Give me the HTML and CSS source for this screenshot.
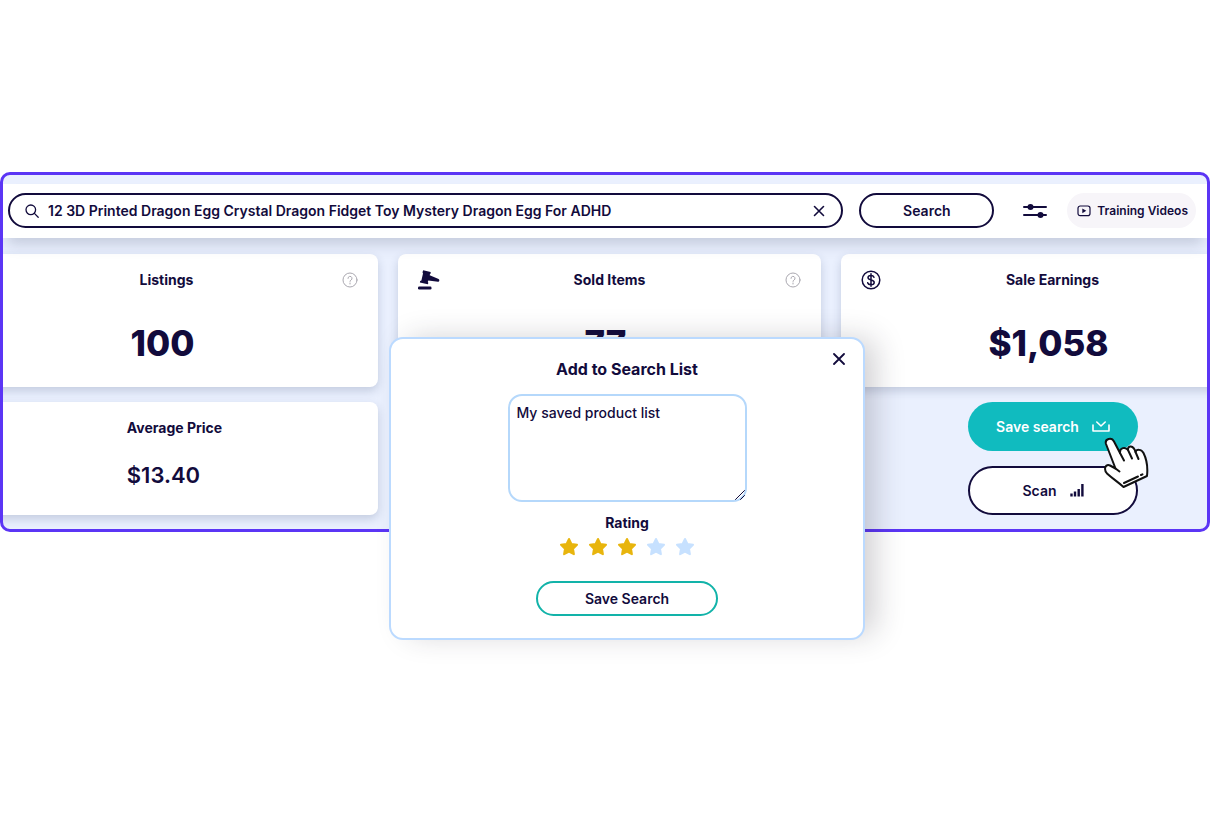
FILE: index.html
```html
<!DOCTYPE html>
<html lang="en">
<head>
    <meta charset="UTF-8">
    <meta name="viewport" content="width=device-width, initial-scale=1.0">
    <title>Product Search</title>
    <link rel="stylesheet" href="styles.css">
</head>
<body>
    <main class="page">
        <div class="panel">
            <form class="topbar">
                <div class="search-box">
                    <svg class="search-icon" viewBox="0 0 14 14" aria-hidden="true">
                        <circle cx="5.8" cy="5.8" r="4.8"/>
                        <path d="M9.4 9.4l3.8 3.8"/>
                    </svg>
                    <input class="search-input" type="text" aria-label="Search products" value="12 3D Printed Dragon Egg Crystal Dragon Fidget Toy Mystery Dragon Egg For ADHD">
                    <button class="icon-button" type="button" aria-label="Clear search">
                        <svg class="clear-icon" viewBox="0 0 12 12"><path d="M1.5 1.5l9 9M10.5 1.5l-9 9"/></svg>
                    </button>
                </div>
                <button class="search-button" type="button">Search</button>
                <button class="icon-button" type="button" aria-label="Filters">
                    <svg class="filter-icon" viewBox="0 0 24 16">
                        <path d="M1 4h22M1 12h22"/>
                        <circle cx="7.5" cy="4" r="3"/>
                        <circle cx="17.5" cy="12" r="3"/>
                    </svg>
                </button>
                <a class="training" href="#">
                    <svg class="video-icon" viewBox="0 0 14 12" aria-hidden="true">
                        <rect x="1" y="1" width="12" height="9.6" rx="2.2"/>
                        <path d="M5.3 3.4v4.8l4-2.4z"/>
                    </svg>
                    Training Videos
                </a>
            </form>

            <div class="cards">
                <section class="card">
                    <div class="card-head">
                        <span></span>
                        <h2>Listings</h2>
                        <button class="icon-button help" type="button" aria-label="About listings">
                            <svg class="help-icon" viewBox="0 0 16 16"><circle cx="8" cy="8" r="7"/><path d="M6 6.4a2 2 0 1 1 3 1.7c-.7.4-1 .7-1 1.3M8 11v1"/></svg>
                        </button>
                    </div>
                    <p class="figure">100</p>
                </section>
                <section class="card">
                    <div class="card-head">
                        <svg class="gavel-icon" viewBox="0 0 22 20" aria-hidden="true">
                            <path d="M5.2.3L12.600 2l.2 1.300-.8.600-.3 1.300 8.900 3.800c1.300.6.900 3-.6 2.800l-9.700-1.300-.5 1.600.6.900-.6 1.200L1.900 12.400l.2-1.300 1.300-.7 1.600-6.800-.5-1.400z"/>
                            <rect x="0" y="16.500" width="13.500" height="3" rx="1.2"/>
                        </svg>
                        <h2>Sold Items</h2>
                        <button class="icon-button help" type="button" aria-label="About sold items">
                            <svg class="help-icon" viewBox="0 0 16 16"><circle cx="8" cy="8" r="7"/><path d="M6 6.4a2 2 0 1 1 3 1.7c-.7.4-1 .7-1 1.3M8 11v1"/></svg>
                        </button>
                    </div>
                    <p class="figure">77</p>
                </section>
                <section class="card">
                    <div class="card-head">
                        <svg class="dollar-icon" viewBox="0 0 20 20" aria-hidden="true">
                            <circle cx="10" cy="10" r="8.8"/>
                            <path d="M13 7.2C12.5 5.9 11.4 5.4 10 5.4c-1.7 0-3 .8-3 2.2 0 1.5 1.4 2 3 2.4 1.7.4 3.2.9 3.2 2.4s-1.4 2.3-3.2 2.3c-1.6 0-2.9-.7-3.3-2M10 3.7v12.6"/>
                        </svg>
                        <h2>Sale Earnings</h2>
                        <span></span>
                    </div>
                    <p class="figure">$1,058</p>
                </section>
                <section class="card average">
                    <div>
                        <h2>Average Price</h2>
                        <p class="price">$13.40</p>
                    </div>
                </section>
                <div class="actions">
                    <button class="pill save" type="button">
                        Save search
                        <svg class="save-icon" viewBox="0 0 18 11" aria-hidden="true"><path d="M1 4v6h16V4M4.8 1L9 5l4.2-4"/></svg>
                    </button>
                    <button class="pill scan" type="button">
                        Scan
                        <svg class="bars-icon" viewBox="0 0 14 13" aria-hidden="true"><path d="M1.5 9.5v3M5 7.5v5M8.7 5v7.500M12.400 0v12.500"/></svg>
                    </button>
                </div>
            </div>
        </div>

        <svg class="hand" viewBox="0 0 46 52" aria-hidden="true">
            <path d="M3 7c-1.500-5 5.500-7.500 8-2.500l6 11.500c-.5-5.500 5.500-6.500 8-3-.5-5 5.500-5 7.500 2 1-3 6-3 8 1 4 8 4.500 14 3.500 23L20.500 50C15 45 10 42 4 36.500 0 31.500 3 26.500 7 28.500l5.500 3z"/>
            <path d="M17 16l4 7.500M25 13l4 8.500M32.500 15l3 7M12.500 31.500l4 3"/>
            <path d="M21 46l14-6.500M38 38l1.500-.7"/>
        </svg>

        <form class="modal" role="dialog" aria-labelledby="modal-title">
            <button class="icon-button modal-close" type="button" aria-label="Close">
                <svg class="close-icon" viewBox="0 0 12 12"><path d="M1 1l10 10M11 1L1 11"/></svg>
            </button>
            <h1 id="modal-title">Add to Search List</h1>
            <div class="note">
                <textarea aria-label="Search list name">My saved product list</textarea>
                <svg class="grip" viewBox="0 0 10 10" aria-hidden="true"><path d="M.5 9.5l9-9M5.500 9.500l4-4"/></svg>
            </div>
            <fieldset class="rating">
                <legend>Rating</legend>
                <div class="stars">
                    <label class="star on"><input type="radio" name="rating" value="1" aria-label="1 star"><svg viewBox="0 0 20 19"><path d="M10 2l2.4 5 5.6.8-4 3.9.9 5.5L10 14.6l-4.9 2.6.9-5.5-4-3.9 5.6-.8z"/></svg></label>
                    <label class="star on"><input type="radio" name="rating" value="2" aria-label="2 stars"><svg viewBox="0 0 20 19"><path d="M10 2l2.4 5 5.6.8-4 3.9.9 5.5L10 14.6l-4.9 2.6.9-5.5-4-3.9 5.6-.8z"/></svg></label>
                    <label class="star on"><input type="radio" name="rating" value="3" aria-label="3 stars" checked><svg viewBox="0 0 20 19"><path d="M10 2l2.4 5 5.6.8-4 3.9.9 5.5L10 14.6l-4.9 2.6.9-5.5-4-3.9 5.6-.8z"/></svg></label>
                    <label class="star"><input type="radio" name="rating" value="4" aria-label="4 stars"><svg viewBox="0 0 20 19"><path d="M10 2l2.4 5 5.6.8-4 3.9.9 5.5L10 14.6l-4.9 2.6.9-5.5-4-3.9 5.6-.8z"/></svg></label>
                    <label class="star"><input type="radio" name="rating" value="5" aria-label="5 stars"><svg viewBox="0 0 20 19"><path d="M10 2l2.4 5 5.6.8-4 3.9.9 5.5L10 14.6l-4.9 2.6.9-5.5-4-3.9 5.6-.8z"/></svg></label>
                </div>
            </fieldset>
            <button class="submit" type="button">Save Search</button>
        </form>
    </main>
</body>
</html>
```
FILE: styles.css
```css
* {
    box-sizing: border-box;
}
body {
    margin: 0;
    background: #fff;
    color: #120b3c;
    font-family: Inter, "Open Sans", sans-serif;
    font-size: 14px;
    line-height: 20px;
}
h1, h2, p {
    margin: 0;
}
button, input, textarea {
    font: inherit;
    color: inherit;
}
button {
    cursor: pointer;
}
svg {
    display: block;
    flex: none;
    fill: none;
    stroke: currentColor;
    stroke-linecap: round;
    stroke-linejoin: round;
}
.page {
    position: relative;
    min-height: 100vh;
    padding-top: 172px;
}
.panel {
    overflow: hidden;
    padding-top: 9px;
    border: 3px solid #5b35f5;
    border-radius: 10px;
    background: #eaf0fe;
}

/* top bar */
.topbar {
    position: relative;
    display: flex;
    align-items: center;
    padding: 9px 11px 10px 5px;
    background: #fff;
    box-shadow: 0 10px 14px -4px rgba(40, 50, 80, 0.2);
}
.search-box {
    display: flex;
    flex: 1;
    align-items: center;
    height: 35px;
    padding: 0 16px 0 15px;
    border: 2px solid #120b3c;
    border-radius: 18px;
}
.search-icon {
    width: 14px;
    height: 14px;
    stroke-width: 1.3;
}
.search-input {
    flex: 1;
    min-width: 0;
    padding: 0;
    margin-left: 9px;
    border: 0;
    outline: 0;
    background: none;
    font-weight: 600;
}
.icon-button {
    padding: 0;
    border: 0;
    background: none;
}
.clear-icon {
    width: 12px;
    height: 12px;
    stroke-width: 1.6;
}
.search-button {
    width: 135px;
    height: 35px;
    margin: 0 29px 0 16px;
    border: 2px solid #120b3c;
    border-radius: 18px;
    background: #fff;
    font-weight: 600;
}
.filter-icon {
    width: 24px;
    height: 16px;
    stroke-width: 2;
}
.filter-icon circle {
    fill: currentColor;
    stroke: none;
}
.training {
    display: flex;
    align-items: center;
    gap: 6px;
    height: 35px;
    margin-left: 20px;
    padding: 0 8px 0 10px;
    border-radius: 18px;
    background: #f7f5f9;
    color: inherit;
    font-size: 12px;
    font-weight: 600;
    text-decoration: none;
}
.video-icon {
    width: 14px;
    height: 12px;
    stroke-width: 1.2;
}
.video-icon path {
    fill: currentColor;
    stroke: none;
}

/* stat cards, the outer ones run past the panel edges */
.cards {
    display: grid;
    grid-template-columns: repeat(3, 1fr);
    gap: 15px 20px;
    margin: 0 -57px 0 -48px;
    padding: 16px 0 14px;
}
.card {
    padding: 16px 20px;
    border-radius: 8px;
    background: #fff;
    box-shadow: 0 4px 10px rgba(40, 60, 100, 0.2);
}
.card h2 {
    font-size: 14px;
    font-weight: 700;
    text-align: center;
}
.card-head {
    display: grid;
    grid-template-columns: 22px 1fr 22px;
    align-items: center;
}
.figure {
    padding: 39px 8px 14px 0;
    font-size: 35px;
    font-weight: 800;
    line-height: 28px;
    text-align: center;
}
.help {
    justify-self: end;
}
.help-icon {
    width: 16px;
    height: 16px;
    color: #aaa8b0;
}
.gavel-icon {
    width: 22px;
    height: 20px;
    fill: currentColor;
    stroke: none;
}
.dollar-icon {
    width: 20px;
    height: 20px;
    stroke-width: 1.5;
}
.average {
    display: flex;
    justify-content: center;
    height: 113px;
    padding: 16px 0 0 16px;
}
.price {
    padding-top: 17px;
    font-size: 22px;
    font-weight: 600;
    line-height: 40px;
}
.actions {
    display: flex;
    flex-direction: column;
    grid-column: 3;
    gap: 15px;
    width: 170px;
    margin-left: 127px;
}
.pill {
    display: flex;
    align-items: center;
    justify-content: center;
    gap: 13px;
    height: 49px;
    border: 0;
    border-radius: 25px;
    font-weight: 600;
}
.save {
    background: #10bbbf;
    color: #fff;
}
.save-icon {
    width: 18px;
    height: 11px;
    stroke-width: 1.6;
}
.scan {
    border: 2px solid #120b3c;
    background: #fff;
}
.bars-icon {
    width: 14px;
    height: 13px;
    stroke-width: 2.4;
    stroke-linecap: butt;
}
.hand {
    position: absolute;
    top: 437px;
    right: 61px;
    width: 46px;
    height: 52px;
    color: #111;
    fill: #fff;
    stroke-width: 2;
}

/* save dialog */
.modal {
    position: absolute;
    top: 337px;
    left: 389px;
    display: flex;
    flex-direction: column;
    align-items: center;
    width: 476px;
    padding: 20px 20px 22px;
    border: 2px solid #bbdaff;
    border-radius: 14px;
    background: #fff;
    box-shadow: 14px -2px 30px -4px rgba(40, 35, 50, 0.22);
}
.modal h1 {
    font-size: 16px;
    font-weight: 700;
    line-height: 20px;
}
.modal-close {
    position: absolute;
    top: 14px;
    right: 18px;
}
.close-icon {
    width: 12px;
    height: 12px;
    stroke-width: 1.8;
}
.note {
    position: relative;
    margin-top: 15px;
}
.note textarea {
    display: block;
    width: 239px;
    height: 108px;
    padding: 7px;
    border: 2px solid #b5d8fb;
    border-radius: 14px;
    outline: 0;
    background: #fff;
    font-weight: 500;
    resize: none;
}
.grip {
    position: absolute;
    right: 2px;
    bottom: 2px;
    width: 10px;
    height: 10px;
}
.rating {
    margin: 11px 0 0;
    padding: 0;
    border: 0;
}
.rating legend {
    margin: 0 auto;
    padding: 0;
    font-weight: 700;
}
.stars {
    display: flex;
    gap: 9px;
    padding-top: 4px;
}
.star {
    position: relative;
    color: #c7e1ff;
}
.star.on {
    color: #e8b50d;
}
.star input {
    position: absolute;
    margin: 0;
    opacity: 0;
}
.star svg {
    width: 20px;
    height: 19px;
    fill: currentColor;
    stroke-width: 2;
}
.submit {
    width: 182px;
    height: 35px;
    margin-top: 25px;
    border: 2px solid #12b3a9;
    border-radius: 18px;
    background: #fff;
    font-weight: 600;
}
```
